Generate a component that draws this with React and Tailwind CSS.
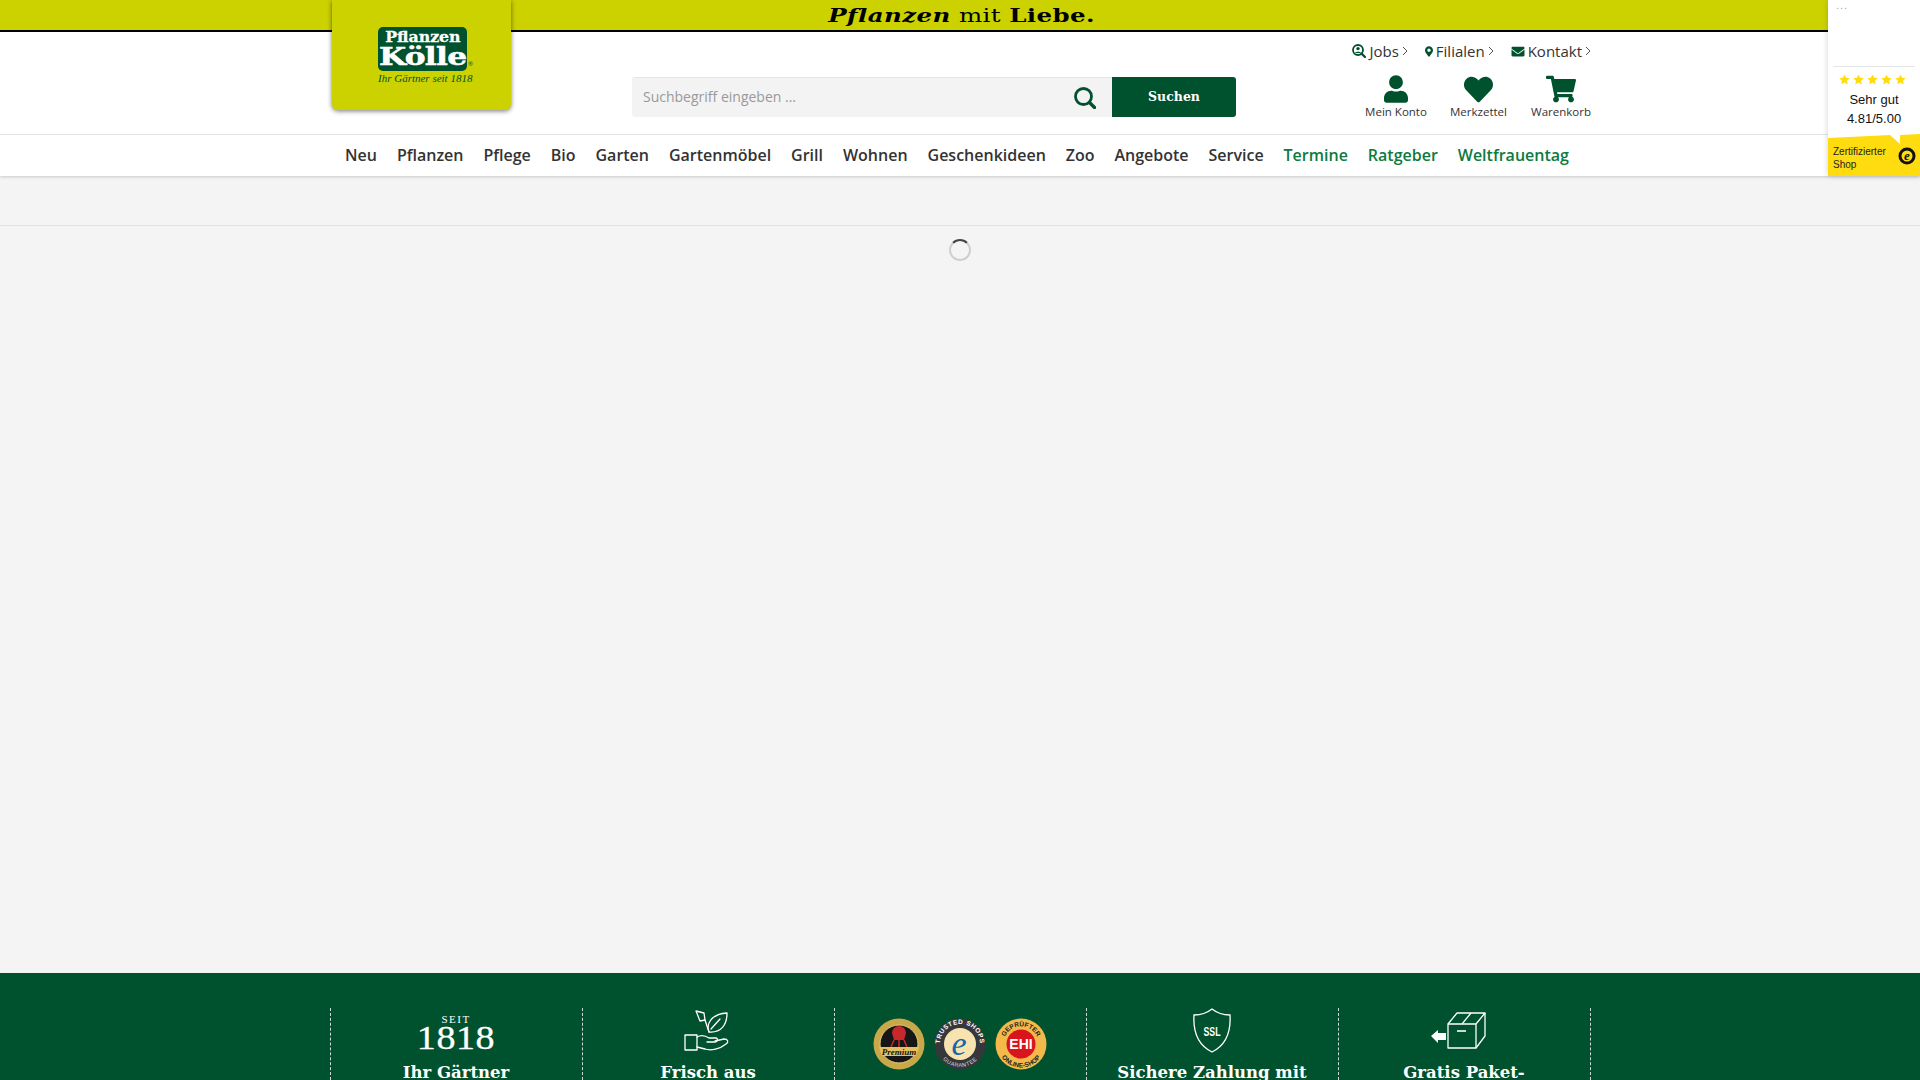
import React from "react";
import { FaUser, FaHeart, FaShoppingCart, FaMapMarkerAlt, FaEnvelope } from "react-icons/fa";

const nav = ["Neu","Pflanzen","Pflege","Bio","Garten","Gartenmöbel","Grill","Wohnen","Geschenkideen","Zoo","Angebote","Service"];
const navGreen = ["Termine","Ratgeber","Weltfrauentag"];

function JobsIcon() {
  return (
    <svg width="14" height="14" viewBox="0 0 14 14" className="text-[#00522f]">
      <circle cx="6" cy="6" r="5" fill="none" stroke="currentColor" strokeWidth="1.800" />
      <circle cx="6" cy="4.600" r="1.700" fill="currentColor" />
      <path d="M3 9c.4-1.800 5.600-1.800 6 0z" fill="currentColor" />
      <path d="M9.600 9.600 13 13" stroke="currentColor" strokeWidth="2.200" strokeLinecap="round" />
    </svg>
  );
}

function SearchGlyph() {
  return (
    <svg width="22" height="22" viewBox="0 0 22 22" fill="none" stroke="#00522f">
      <circle cx="9.500" cy="9.500" r="8" strokeWidth="2.800" />
      <path d="M15.500 15.500 20.500 20.500" strokeWidth="3.400" strokeLinecap="round" />
    </svg>
  );
}

function Chevron() {
  return (
    <svg width="6" height="10" viewBox="0 0 6 10" fill="none" stroke="#555" strokeWidth="1">
      <path d="M1 1l4 4-4 4" />
    </svg>
  );
}

function TopLink({ icon, label }) {
  return (
    <a className="flex items-center gap-[3px] text-[15px] leading-5 text-[#333]">
      {icon}
      <span>{label}</span>
      <Chevron />
    </a>
  );
}

function Account({ icon, label, w }) {
  return (
    <div className={`flex flex-col items-center ${w}`}>
      <div className="h-[30px] flex items-center justify-center text-[#00522f]">{icon}</div>
      <span className="mt-[1px] text-[11.500px] leading-[14px] text-[#333] whitespace-nowrap">{label}</span>
    </div>
  );
}

function Widget() {
  return (
    <div className="absolute top-0 right-0 w-[92px] h-[176px] bg-white shadow-[0_0_6px_rgba(0,0,0,0.18)] flex flex-col font-['Liberation_Sans',Arial,sans-serif] z-20">
      <div className="h-[67px] mx-[5px] border-b border-[#e5e5e5] pl-[3px] text-[#aaa] text-[11px] leading-[10px] tracking-[1px]">...</div>
      <div className="mt-[7px] flex justify-center gap-[3px] pr-[3px]">
        {[0,1,2,3,4].map((i) => (
          <svg key={i} width="11" height="11" viewBox="0 0 24 24" fill="#ffdc0f">
            <path d="M12 1l3.400 7.400 8.100.9-6 5.500 1.700 8L12 18.800 4.800 22.800l1.700-8-6-5.500 8.100-.9z" />
          </svg>
        ))}
      </div>
      <div className="mt-[5px] text-center text-[13px] leading-[19px] text-[#111]">Sehr gut</div>
      <div className="text-center text-[13px] leading-[19px] text-[#111]">4.81/5.00</div>
      <div className="relative mt-auto h-[42px]">
        <svg width="92" height="42" viewBox="0 0 92 42" className="absolute inset-0">
          <path d="M0 4 L62 1 L72 10 L72 1 L92 0 L92 42 L0 42 Z" fill="#ffdc0f" />
          <circle cx="79" cy="22" r="8.500" fill="#111" />
          <circle cx="79" cy="22" r="5.500" fill="#ffdc0f" />
        </svg>
        <span className="absolute left-[76px] top-[14px] font-['Liberation_Serif',serif] italic font-bold text-[13px] leading-[15px] text-[#111]">e</span>
        <div className="absolute left-[5px] top-[11px] text-[10px] leading-[13px] text-[#222]">Zertifizierter<br />Shop</div>
      </div>
    </div>
  );
}

function Logo() {
  return (
    <div className="absolute left-[2px] -top-[32px] w-[179px] h-[110px] bg-[#ccd200] rounded-b-[6px] shadow-[0_1px_5px_rgba(0,0,0,0.55)] z-10">
      <div className="absolute left-[46px] top-[27px] w-[89px] h-[44px] rounded-[5px] bg-[#00522f] text-white font-['DejaVu_Serif',serif] font-bold flex flex-col items-center">
        <div className="text-[15px] leading-[14px] pt-[3px] h-[18px] scale-x-[1.05] whitespace-nowrap [-webkit-text-stroke:0.3px_white]">Pflanzen</div>
        <div className="text-[24px] leading-[24px] scale-x-[1.3] tracking-[-0.5px] whitespace-nowrap [-webkit-text-stroke:0.5px_white]">Kölle</div>
      </div>
      <span className="absolute left-[136px] top-[61px] text-[6px] leading-[6px] text-[#00522f]">®</span>
      <div className="absolute left-[46px] top-[72px] w-[89px] text-center font-['Liberation_Serif',serif] italic text-[11px] leading-[13px] text-[#00522f] whitespace-nowrap">Ihr Gärtner seit 1818</div>
    </div>
  );
}

function Badges() {
  return (
    <div className="flex items-center justify-center gap-[9px] pt-[10px]">
      <svg width="52" height="52" viewBox="0 0 52 52">
        <circle cx="26" cy="26" r="25.500" fill="#c9a84a" />
        <circle cx="26" cy="26" r="19" fill="#161616" stroke="#e2c878" />
        <path d="M19 15a7 7 0 0 1 14 0l-2 7H21z" fill="#c8272c" />
        <path d="M21 22l-3 7M31 22l3 7M26 22v7" stroke="#c8272c" strokeWidth="1.500" />
        <path d="M6 29h40l-3 9H9z" fill="#e4c15f" />
        <text x="26" y="36.500" textAnchor="middle" fontSize="9" fontStyle="italic" fontWeight="700" fill="#161616" fontFamily="Liberation Serif, serif">Premium</text>
      </svg>
      <svg width="52" height="52" viewBox="0 0 52 52">
        <circle cx="26" cy="26" r="25.500" fill="#35373a" />
        <circle cx="26" cy="26" r="16" fill="#f6e3b0" />
        <defs>
          <path id="ts-top" d="M6.500 30.400A20 20 0 1 1 45.500 30.400" />
          <path id="ts-bot" d="M3 26A23 23 0 0 0 49 26" />
        </defs>
        <text fontSize="6.500" fontWeight="700" fill="#fff" textAnchor="middle" fontFamily="Liberation Sans, sans-serif" letterSpacing="0.500"><textPath href="#ts-top" startOffset="50%">TRUSTED SHOPS</textPath></text>
        <text fontSize="5.500" fill="#ddd" textAnchor="middle" fontFamily="Liberation Sans, sans-serif" letterSpacing="0.500"><textPath href="#ts-bot" startOffset="50%">GUARANTEE</textPath></text>
        <text x="25" y="37" textAnchor="middle" fontSize="34" fontStyle="italic" fill="#1565a8" fontFamily="Liberation Serif, serif">e</text>
      </svg>
      <svg width="52" height="52" viewBox="0 0 52 52">
        <circle cx="26" cy="26" r="25.500" fill="#f3b94a" />
        <circle cx="26" cy="26" r="14.500" fill="#d8141c" />
        <defs>
          <path id="ehi-top" d="M9 30A17.500 17.500 0 1 1 43 30" />
          <path id="ehi-bot" d="M2.500 26A23.500 23.500 0 0 0 49.500 26" />
        </defs>
        <text fontSize="6.500" fontWeight="700" fill="#222" textAnchor="middle" fontFamily="Liberation Sans, sans-serif"><textPath href="#ehi-top" startOffset="50%">GEPRÜFTER</textPath></text>
        <text fontSize="6.500" fontWeight="700" fill="#222" textAnchor="middle" fontFamily="Liberation Sans, sans-serif"><textPath href="#ehi-bot" startOffset="50%">ONLINE-SHOP</textPath></text>
        <text x="26" y="31" textAnchor="middle" fontSize="14" fontWeight="700" fill="#fff" fontFamily="Liberation Sans, sans-serif">EHI</text>
      </svg>
    </div>
  );
}

function FooterCol({ children, title }) {
  return (
    <div className="h-full border-r border-dashed border-white/80 flex flex-col items-center overflow-hidden">
      <div className="h-[49px] shrink-0 flex items-end justify-center">{children}</div>
      <div className="shrink-0 mt-[4px] text-[16.500px] leading-[24px] font-bold text-white whitespace-nowrap font-['DejaVu_Serif',serif]">{title}</div>
    </div>
  );
}

export default function App() {
  return (
    <div className="relative h-screen overflow-hidden flex flex-col bg-[#f4f4f4] font-['Open_Sans',sans-serif]">
      <div className="h-[32px] shrink-0 bg-[#ccd200] border-b-2 border-black flex items-center justify-center pt-[2px] text-black font-['DejaVu_Serif',serif] text-[18px] leading-[28px] tracking-[0.3px]">
        <span className="pl-[3px] whitespace-nowrap scale-x-[1.36]"><span className="italic font-bold">Pflanzen</span> <span className="font-normal">mit</span> <span className="font-bold">Liebe.</span></span>
      </div>

      <div className="h-[103px] shrink-0 bg-white border-b border-[#ececec]">
        <div className="relative w-[1260px] h-full mx-auto pl-[302px] flex flex-col">
          <Logo />
          <div className="flex justify-end gap-[17px] pt-[9px] -mr-[1px]">
            <TopLink icon={<JobsIcon />} label="Jobs" />
            <TopLink icon={<FaMapMarkerAlt className="w-[8px] h-[13px] text-[#00522f]" />} label="Filialen" />
            <TopLink icon={<FaEnvelope className="w-[14px] h-[13px] text-[#00522f]" />} label="Kontakt" />
          </div>
          <div className="flex items-start mt-[16px]">
            <div className="w-[480px] h-[40px] bg-[#f3f3f3] rounded-l-[3px] border-t border-[#e6e6e6] flex items-center justify-between pl-[11px] pr-[16px]">
              <span className="text-[14px] leading-5 pb-[2px] text-[#999]">Suchbegriff eingeben ...</span>
              <SearchGlyph />
            </div>
            <div className="w-[124px] h-[40px] bg-[#00522f] rounded-r-[3px] flex items-center justify-center text-white font-bold text-[12.500px] font-['DejaVu_Serif',serif]">Suchen</div>
            <div className="ml-auto -mr-[1px] -mt-[3px] flex gap-[24px]">
              <Account w="w-[60px]" icon={<FaUser className="w-[24px] h-[28px]" />} label="Mein Konto" />
              <Account w="w-[57px]" icon={<FaHeart className="w-[33px] h-[29px]" />} label="Merkzettel" />
              <Account w="w-[60px]" icon={<FaShoppingCart className="w-[30px] h-[28px]" />} label="Warenkorb" />
            </div>
          </div>
        </div>
      </div>

      <div className="h-[41px] shrink-0 bg-white shadow-[0_1px_3px_rgba(0,0,0,0.18)] z-[1]">
        <div className="w-[1260px] h-full mx-auto pl-[15px] pb-[2px] flex items-center gap-[19.960px] text-[16px] font-semibold text-[#333] whitespace-nowrap">
          {nav.map((n) => <a key={n}>{n}</a>)}
          {navGreen.map((n) => <a key={n} className="text-[#0d7a3e]">{n}</a>)}
        </div>
      </div>

      <div className="h-[50px] shrink-0 border-b border-[#e2e2e2]" />

      <div className="flex-1 flex justify-center pt-[13px]">
        <div className="w-[22px] h-[22px] rounded-full border-2 border-[#cfcfcf] border-t-[#444]" />
      </div>

      <div className="h-[107px] shrink-0 bg-[#00522f] pt-[35px]">
        <div className="w-[1261px] h-full mx-auto grid grid-cols-5 border-l border-dashed border-white/80">
          <FooterCol title="Ihr Gärtner">
            <div className="flex flex-col items-center text-white font-['Liberation_Serif',serif] mb-[4px]">
              <span className="text-[11px] leading-[8px] tracking-[1.500px]">SEIT</span>
              <span className="text-[34px] leading-[30px] scale-x-[1.12] tracking-[0.5px] [-webkit-text-stroke:0.3px_white]">1818</span>
            </div>
          </FooterCol>
          <FooterCol title="Frisch aus">
            <svg width="46" height="44" viewBox="0 0 46 44" fill="none" stroke="#fff" strokeWidth="1.300" strokeLinejoin="round" strokeLinecap="round" className="mb-[3px] -ml-[3px]">
              <path d="M12 1l8 2 1 7-5 1z" />
              <path d="M21 10l4 12" />
              <path d="M25 22c-3-8 2-18 18-19 0 12-6 20-18 19z" />
              <path d="M27 19l9-10" />
              <path d="M1 25h12v15H1z" />
              <path d="M13 27c5-3 9-1 12 1h7c2 0 2 4-1 4h-8" />
              <path d="M31 31l9-2c4 0 5 3 2 5-6 5-15 7-21 5l-8-2" />
            </svg>
          </FooterCol>
          <div className="h-full border-r border-dashed border-white/80 overflow-hidden">
            <Badges />
          </div>
          <FooterCol title="Sichere Zahlung mit">
            <svg width="40" height="46" viewBox="0 0 40 46" fill="none" stroke="#fff" strokeWidth="1.300" className="mb-[3px]">
              <path d="M20 1c5 4 12 6 18 6 1 16-4 30-18 37C6 37 1 23 2 7c6 0 13-2 18-6z" />
              <text x="20" y="28" textAnchor="middle" fontSize="12" fontWeight="700" fill="#fff" stroke="none" fontFamily="Liberation Sans Narrow, Liberation Sans, sans-serif" textLength="17" lengthAdjust="spacingAndGlyphs">SSL</text>
            </svg>
          </FooterCol>
          <FooterCol title="Gratis Paket-">
            <svg width="56" height="38" viewBox="0 0 56 38" fill="none" stroke="#fff" strokeWidth="1.300" strokeLinejoin="round" className="mb-[7px] -ml-[12px]">
              <path d="M18 12h28v24H18z" />
              <path d="M18 12 27 1h28l-9 11" />
              <path d="M55 1v23l-9 12" />
              <path d="M32 12l9-11" />
              <path d="M27 19h9" strokeWidth="1.600" />
              <path d="M1 24l7-6v3h8v7H8v3z" fill="#fff" stroke="none" />
            </svg>
          </FooterCol>
        </div>
      </div>

      <Widget />
    </div>
  );
}
